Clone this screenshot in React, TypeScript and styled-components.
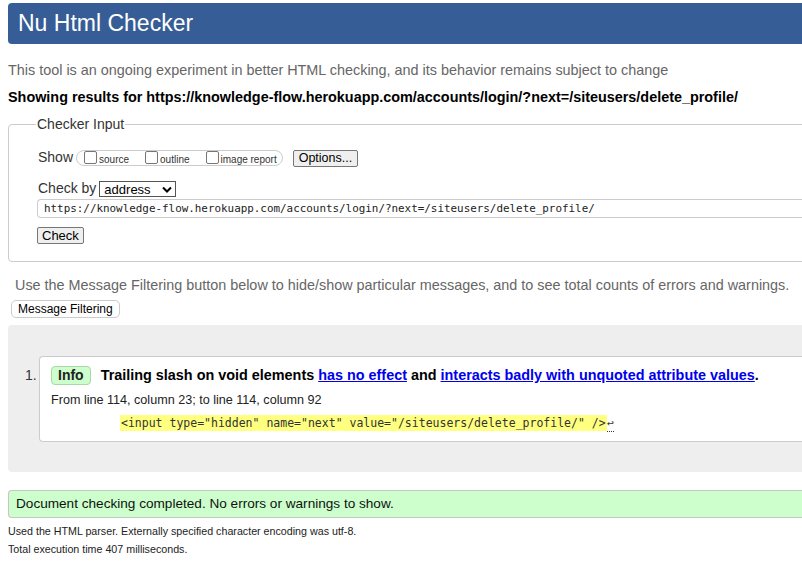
import React from "react";
import styled, { createGlobalStyle } from "styled-components";

const Global = createGlobalStyle`
  html, body { overflow: hidden; }
  body {
    margin: 0;
    background: #fff;
    font-family: "Liberation Sans", Arial, sans-serif;
    font-size: 14px;
    color: #000;
  }
`;

const Page = styled.div`
  width: 1000px;
  padding: 3px 8px 0 8px;
`;

const Header = styled.h1`
  margin: 0;
  height: 41px;
  background: #365d95;
  color: #fff;
  border-radius: 4px;
  font-weight: normal;
  font-size: 23px;
  line-height: 41px;
  padding-left: 10px;
`;

const Intro = styled.p`
  margin: 17px 0 0;
  font-size: 14.4px;
  line-height: 18px;
  color: #666;
`;

const Results = styled.p`
  margin: 9px 0 0;
  font-size: 14.4px;
  line-height: 18px;
  font-weight: bold;
`;

const Fieldset = styled.fieldset`
  margin: 9px 0 0;
  border: 1px solid #ccc;
  border-radius: 4px;
  padding: 6px 0 17px 29px;
  height: 122px;
`;

const Legend = styled.legend`
  padding: 0 1px;
  margin-left: -2px;
  font-size: 14px;
  color: #333;
  line-height: 18px;
`;

const Row = styled.div<{ $top: number }>`
  display: flex;
  align-items: center;
  margin-top: ${(p) => p.$top}px;
  height: 18px;
`;

const RowLabel = styled.span`
  color: #333;
  margin-right: 3px;
  position: relative;
  top: -1px;
`;

const Group = styled.span`
  display: inline-flex;
  align-items: center;
  gap: 16px;
  border: 1px solid #ccc;
  border-radius: 8px;
  height: 16px;
  padding: 0 5px 0 7px;
  box-sizing: border-box;
  margin-right: 10px;
`;

const Check = styled.label`
  display: inline-flex;
  align-items: flex-end;
  font-size: 10px;
  line-height: 11px;
  color: #333;
  white-space: nowrap;
`;

const Box = styled.span`
  display: inline-block;
  width: 11px;
  height: 11px;
  border: 1px solid #767676;
  border-radius: 2px;
  margin-right: 2px;
  position: relative;
  top: -1px;
`;

const Button = styled.button`
  font-family: "Liberation Sans", Arial, sans-serif;
  font-size: 12.5px;
  color: #000;
  background: #efefef;
  border: 1px solid #767676;
  border-radius: 2px;
  padding: 0 5px;
  height: 17px;
  line-height: 15px;
`;

const Select = styled.span`
  display: inline-flex;
  align-items: center;
  justify-content: space-between;
  width: 77px;
  height: 16px;
  box-sizing: border-box;
  border: 1px solid #555;
  padding: 0 3px 0 4px;
  font-size: 13px;
  color: #000;
`;

const UrlField = styled.div`
  margin-top: 1px;
  margin-left: -1px;
  height: 19px;
  box-sizing: border-box;
  border: 1px solid #ccc;
  border-right: none;
  border-radius: 4px 0 0 4px;
  padding-left: 6px;
  font-family: "DejaVu Sans Mono", "Liberation Mono", monospace;
  font-size: 10.9px;
  line-height: 17px;
  color: #222;
`;

const CheckButton = styled(Button)`
  margin-top: 9px;
  margin-left: -1px;
  padding: 0 4px;
  font-size: 13px;
`;

const Hint = styled.p`
  margin: 14px 0 0 7px;
  font-size: 14.4px;
  color: #666;
  line-height: 18px;
`;

const FilterButton = styled.button`
  margin-top: 6px;
  margin-left: 3px;
  font-family: "Liberation Sans", Arial, sans-serif;
  font-size: 12px;
  color: #000;
  background: #fff;
  border: 1px solid #ccc;
  border-radius: 5px;
  height: 18px;
  padding: 0 6px;
  line-height: 16px;
`;

const ResultsArea = styled.div`
  margin-top: 7px;
  background: #eee;
  border-radius: 4px;
  padding: 31px 0 30px 17px;
`;

const Message = styled.div`
  display: flex;
  align-items: flex-start;
`;

const Num = styled.span`
  width: 14px;
  padding-top: 12px;
  line-height: 14px;
  color: #333;
`;

const MsgBox = styled.div`
  flex: 1;
  background: #fff;
  border: 1px solid #ccc;
  border-right: none;
  border-radius: 4px 0 0 4px;
  padding: 8px 0 11px 11px;
  height: 65px;
`;

const Title = styled.p`
  margin: 0;
  font-size: 14.4px;
  font-weight: bold;
  line-height: 20px;
`;

const Badge = styled.span`
  display: inline-block;
  background: #ccffcc;
  border: 1px solid #a8d8a8;
  border-radius: 4px;
  padding: 0 6px;
  margin-right: 10px;
  font-size: 14px;
  line-height: 17px;
  color: #222;
`;

const Link = styled.a`
  color: #0000ee;
  text-decoration: underline;
`;

const Location = styled.p`
  margin: 6px 0 0;
  font-size: 12.6px;
  line-height: 18px;
  color: #222;
`;

const Extract = styled.p`
  margin: 7px 0 0 69px;
  font-family: "DejaVu Sans Mono", "Liberation Mono", monospace;
  font-size: 11.5px;
  line-height: 14px;
  color: #333;
`;

const Mark = styled.mark`
  background: #ffff80;
  color: #333;
  padding: 1px 1px;
`;

const Lf = styled.span`
  border-bottom: 1px dotted #333;
  color: #333;
  padding-bottom: 1px;
`;

const Success = styled.div`
  margin-top: 18px;
  background: #ccffcc;
  border: 1px solid #c6c6c6;
  border-right: none;
  border-radius: 4px 0 0 4px;
  padding: 0 0 0 7px;
  height: 26px;
  font-size: 13.6px;
  line-height: 26px;
  color: #111;
`;

const Footer = styled.div`
  margin-top: 4px;
`;

const Details = styled.p`
  margin: 0;
  font-size: 10.7px;
  line-height: 18px;
  color: #222;
`;

const Chevron = () => (
  <svg width="10" height="7" viewBox="0 0 10 7">
    <path d="M1 1.5 L5 5.5 L9 1.5" fill="none" stroke="#000" strokeWidth="2" />
  </svg>
);

export default function App() {
  const url =
    "https://knowledge-flow.herokuapp.com/accounts/login/?next=/siteusers/delete_profile/";
  return (
    <Page>
      <Global />
      <Header>Nu Html Checker</Header>
      <Intro>
        This tool is an ongoing experiment in better HTML checking, and its behavior remains
        subject to change
      </Intro>
      <Results>Showing results for {url}</Results>
      <Fieldset>
        <Legend>Checker Input</Legend>
        <Row $top={10}>
          <RowLabel>Show</RowLabel>
          <Group>
            <Check>
              <Box />
              source
            </Check>
            <Check>
              <Box />
              outline
            </Check>
            <Check>
              <Box />
              image report
            </Check>
          </Group>
          <Button>Options...</Button>
        </Row>
        <Row $top={13}>
          <RowLabel>Check by</RowLabel>
          <Select>
            address
            <Chevron />
          </Select>
        </Row>
        <UrlField>{url}</UrlField>
        <CheckButton>Check</CheckButton>
      </Fieldset>
      <Hint>
        Use the Message Filtering button below to hide/show particular messages, and to see
        total counts of errors and warnings.
      </Hint>
      <FilterButton>Message Filtering</FilterButton>
      <ResultsArea>
        <Message>
          <Num>1.</Num>
          <MsgBox>
            <Title>
              <Badge>Info</Badge>
              Trailing slash on void elements <Link href="#">has no effect</Link> and{" "}
              <Link href="#">interacts badly with unquoted attribute values</Link>.
            </Title>
            <Location>From line 114, column 23; to line 114, column 92</Location>
            <Extract>
              <Mark>{'<input type="hidden" name="next" value="/siteusers/delete_profile/" />'}</Mark>
              <Lf>↩</Lf>
            </Extract>
          </MsgBox>
        </Message>
      </ResultsArea>
      <Success>Document checking completed. No errors or warnings to show.</Success>
      <Footer>
        <Details>Used the HTML parser. Externally specified character encoding was utf-8.</Details>
        <Details>Total execution time 407 milliseconds.</Details>
      </Footer>
    </Page>
  );
}
